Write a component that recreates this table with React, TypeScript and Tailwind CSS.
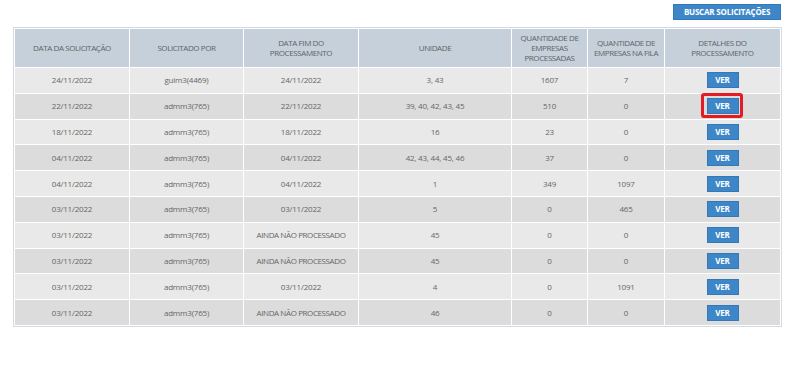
import React from "react";

type Row = {
  data: string;
  por: string;
  fim: string;
  unidade: string;
  processadas: string;
  fila: string;
};

const rows: Row[] = [
  { data: "24/11/2022", por: "guim3(4469)", fim: "24/11/2022", unidade: "3, 43", processadas: "1607", fila: "7" },
  { data: "22/11/2022", por: "admm3(765)", fim: "22/11/2022", unidade: "39, 40, 42, 43, 45", processadas: "510", fila: "0" },
  { data: "18/11/2022", por: "admm3(765)", fim: "18/11/2022", unidade: "16", processadas: "23", fila: "0" },
  { data: "04/11/2022", por: "admm3(765)", fim: "04/11/2022", unidade: "42, 43, 44, 45, 46", processadas: "37", fila: "0" },
  { data: "04/11/2022", por: "admm3(765)", fim: "04/11/2022", unidade: "1", processadas: "349", fila: "1097" },
  { data: "03/11/2022", por: "admm3(765)", fim: "03/11/2022", unidade: "5", processadas: "0", fila: "465" },
  { data: "03/11/2022", por: "admm3(765)", fim: "AINDA NÃO PROCESSADO", unidade: "45", processadas: "0", fila: "0" },
  { data: "03/11/2022", por: "admm3(765)", fim: "AINDA NÃO PROCESSADO", unidade: "45", processadas: "0", fila: "0" },
  { data: "03/11/2022", por: "admm3(765)", fim: "03/11/2022", unidade: "4", processadas: "0", fila: "1091" },
  { data: "03/11/2022", por: "admm3(765)", fim: "AINDA NÃO PROCESSADO", unidade: "46", processadas: "0", fila: "0" },
];

const VerButton: React.FC<{ highlight?: boolean }> = ({ highlight }) => (
  <span className="relative inline-block align-middle">
    <button className="block w-[32px] h-[16px] bg-[#3d87c9] border border-[#3478b5] text-white font-bold text-[8px] leading-none">
      VER
    </button>
    {highlight && (
      <span className="absolute -left-[6px] -right-[4px] -top-[5px] -bottom-[4px] border-[3px] border-[#e41b22] rounded-[3px]"></span>
    )}
  </span>
);

export default function App() {
  return (
    <div
      className="bg-white w-[795px] h-[371px] px-[13px] pt-[4px] text-[#666666]"
      style={{ fontFamily: '"Open Sans", "DejaVu Sans", sans-serif' }}
    >
      <div className="flex justify-end pr-[1px]">
        <button className="w-[108px] h-[16px] bg-[#3d87c9] border border-[#3478b5] text-white font-bold text-[8px] leading-none tracking-[-0.2px]">
          BUSCAR SOLICITAÇÕES
        </button>
      </div>

      <div className="mt-[7px] border border-[#d3dae5]">
        <table className="w-full border-collapse table-fixed text-[8px] text-center">
          <colgroup>
            <col className="w-[115px]" />
            <col className="w-[114px]" />
            <col className="w-[115px]" />
            <col className="w-[153px]" />
            <col className="w-[76px]" />
            <col className="w-[77px]" />
            <col />
          </colgroup>
          <thead>
            <tr className="bg-[#c5d0da] h-[39px] leading-[10px] text-[#5f6366] tracking-[-0.4px]">
              <th className="font-normal border border-white">DATA DA SOLICITAÇÃO</th>
              <th className="font-normal border border-white">SOLICITADO POR</th>
              <th className="font-normal border border-white">DATA FIM DO<br />PROCESSAMENTO</th>
              <th className="font-normal border border-white">UNIDADE</th>
              <th className="font-normal border border-white">QUANTIDADE DE<br />EMPRESAS<br />PROCESSADAS</th>
              <th className="font-normal border border-white">QUANTIDADE DE<br />EMPRESAS NA FILA</th>
              <th className="font-normal border border-white">DETALHES DO<br />PROCESSAMENTO</th>
            </tr>
          </thead>
          <tbody className="tracking-[-0.2px]">
            {rows.map((r, i) => (
              <tr key={i} className={`h-[25.8px] ${i % 2 === 0 ? "bg-[#e9e9e9]" : "bg-[#dcdcdc]"}`}>
                <td className="border border-white">{r.data}</td>
                <td className="border border-white">{r.por}</td>
                <td className={`border border-white ${r.fim.startsWith("AINDA") ? "tracking-[-0.4px]" : ""}`}>{r.fim}</td>
                <td className="border border-white">{r.unidade}</td>
                <td className="border border-white">{r.processadas}</td>
                <td className="border border-white">{r.fila}</td>
                <td className="border border-white">
                  <VerButton highlight={i === 1} />
                </td>
              </tr>
            ))}
          </tbody>
        </table>
      </div>
    </div>
  );
}
